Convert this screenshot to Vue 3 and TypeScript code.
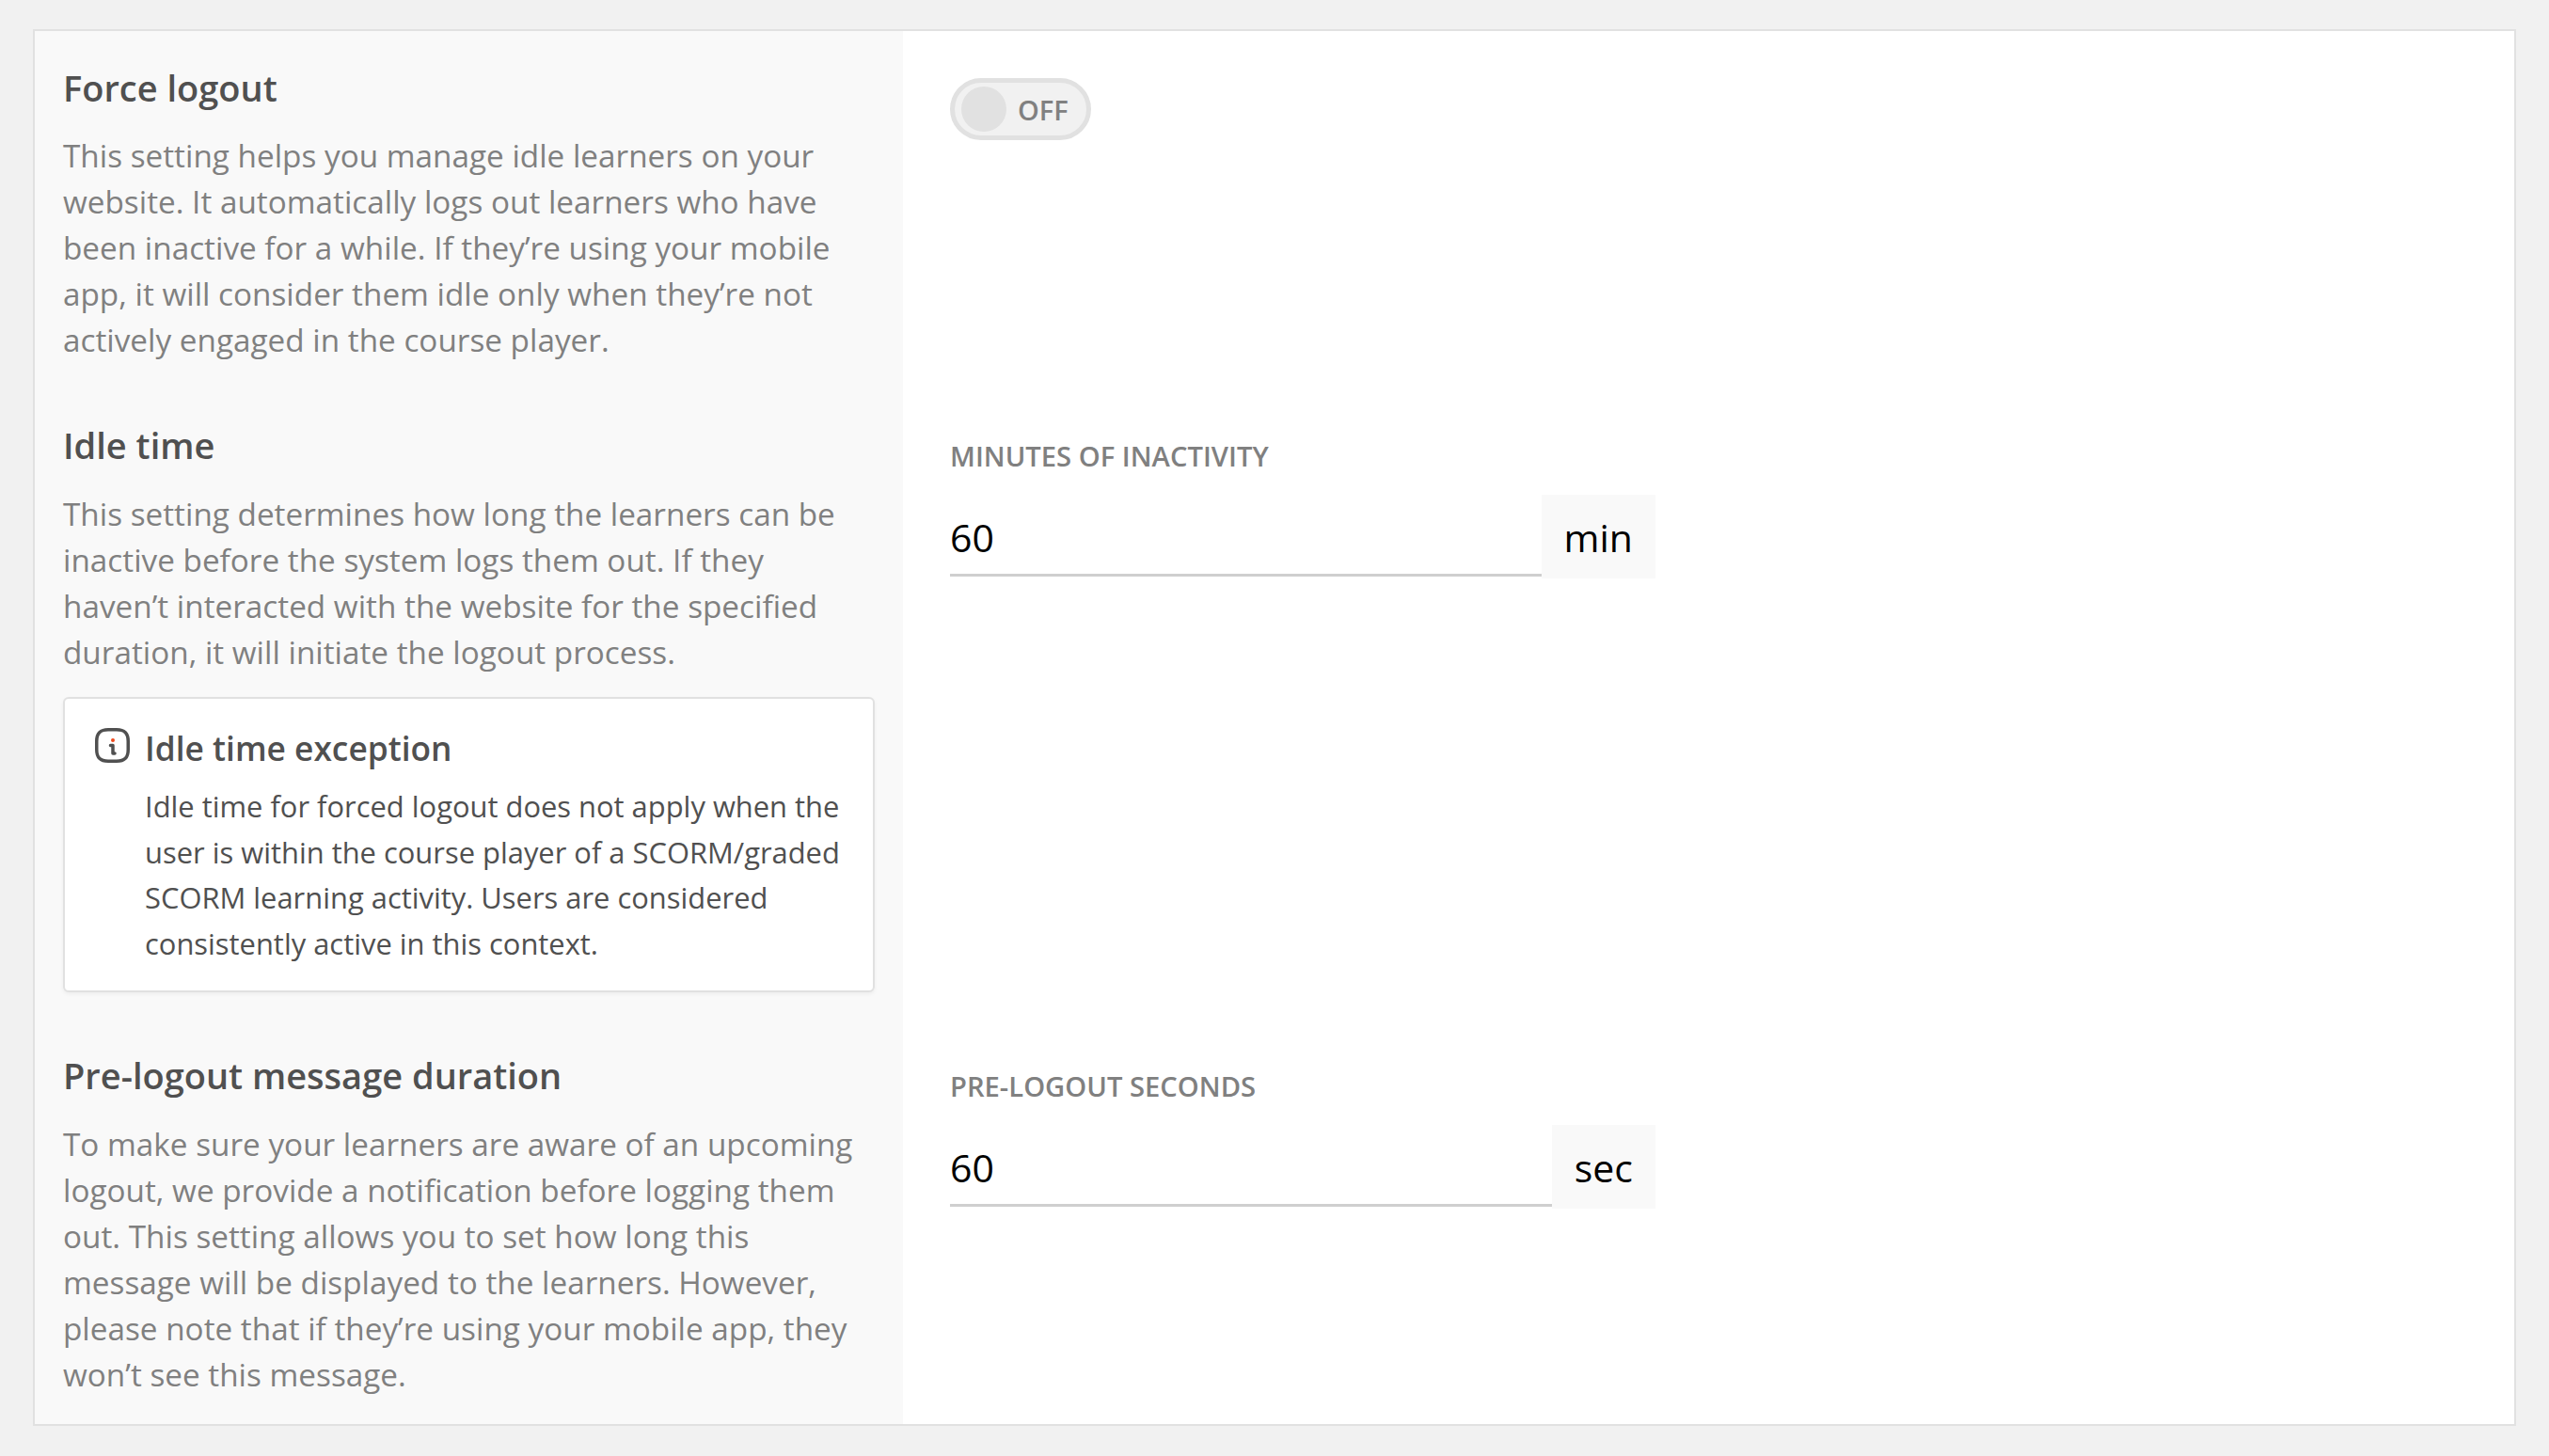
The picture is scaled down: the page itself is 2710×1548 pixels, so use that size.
<template>
  <div class="page">
    <div class="card">
      <section class="row row-force">
        <div class="info">
          <h3>Force logout</h3>
          <p>This setting helps you manage idle learners on your website. It automatically logs out learners who have been inactive for a while. If they’re using your mobile app, it will consider them idle only when they’re not actively engaged in the course player.</p>
        </div>
        <div class="field">
          <label class="switch">
            <input type="checkbox" v-model="forceLogout">
            <span class="knob"></span>
            <span class="state">{{ forceLogout ? 'ON' : 'OFF' }}</span>
          </label>
        </div>
      </section>

      <section class="row row-idle">
        <div class="info">
          <h3>Idle time</h3>
          <p>This setting determines how long the learners can be inactive before the system logs them out. If they haven’t interacted with the website for the specified duration, it will initiate the logout process.</p>
          <div class="notice">
            <svg class="notice-icon" viewBox="0 0 37 37" fill="none">
              <path d="M14 1.75H23C31.5 1.75 35.25 5.5 35.25 14V23C35.25 31.5 31.5 35.25 23 35.25H14C5.5 35.25 1.75 31.5 1.75 23V14C1.75 5.5 5.5 1.75 14 1.75Z" stroke="#505050" stroke-width="3.5" />
              <circle cx="19" cy="13" r="2" fill="#f04a1d" />
              <path d="M16.5 18.5H19V27H21" stroke="#505050" stroke-width="3.5" stroke-linecap="round" stroke-linejoin="round" />
            </svg>
            <div>
              <h4>Idle time exception</h4>
              <p>Idle time for forced logout does not apply when the user is within the course player of a SCORM/graded SCORM learning activity. Users are considered consistently active in this context.</p>
            </div>
          </div>
        </div>
        <div class="field">
          <label class="field-label" for="idle-minutes">MINUTES OF INACTIVITY</label>
          <div class="input-group">
            <input id="idle-minutes" type="text" v-model="idleMinutes">
            <span class="addon">min</span>
          </div>
        </div>
      </section>

      <section class="row row-message">
        <div class="info">
          <h3>Pre-logout message duration</h3>
          <p>To make sure your learners are aware of an upcoming logout, we provide a notification before logging them out. This setting allows you to set how long this message will be displayed to the learners. However, please note that if they’re using your mobile app, they won’t see this message.</p>
        </div>
        <div class="field">
          <label class="field-label" for="pre-seconds">PRE-LOGOUT SECONDS</label>
          <div class="input-group">
            <input id="pre-seconds" type="text" v-model="preSeconds">
            <span class="addon">sec</span>
          </div>
        </div>
      </section>
    </div>
  </div>
</template>

<script setup lang="ts">
import { ref, Ref } from 'vue';

const forceLogout: Ref<boolean> = ref(false);
const idleMinutes: Ref<string> = ref('60');
const preSeconds: Ref<string> = ref('60');
</script>

<style>
body {
  background: #f1f1f1;
}
</style>

<style scoped>
* {
  box-sizing: border-box;
}
.page {
  padding: 31px 35px 32px;
  font-family: "Open Sans", "Noto Sans", sans-serif;
}
.card {
  background: #fff;
  border: 2px solid #e1e1e1;
}
.row {
  display: grid;
  grid-template-columns: 923px 1fr;
}
.info {
  background: #f9f9f9;
  padding: 34px 30px 30px;
}
.row-force .info {
  padding-top: 36px;
  padding-bottom: 29px;
}
.row-force h3 {
  margin-bottom: 24px;
}
.row-message .info {
  padding-top: 34px;
  padding-bottom: 28px;
}
h3 {
  margin: 0 0 25px;
  font-size: 38px;
  line-height: 48px;
  font-weight: 600;
  color: #505050;
}
.info p {
  margin: 0;
  font-size: 33.3px;
  line-height: 49px;
  color: #808080;
}
.notice {
  display: flex;
  gap: 16px;
  margin-top: 23px;
  padding: 28px 14px 26px 32px;
  background: #fff;
  border: 2px solid #e1e1e1;
  border-radius: 6px;
  box-shadow: 0 2px 4px rgba(0, 0, 0, 0.05);
}
.notice-icon {
  flex: none;
  width: 37px;
  height: 37px;
  margin-top: 3px;
}
.notice h4 {
  margin: 0 0 14px;
  font-size: 35.3px;
  line-height: 48px;
  font-weight: 600;
  color: #505050;
}
.notice p {
  font-size: 30.9px;
  line-height: 48.5px;
  color: #505050;
}
.field {
  padding: 50px 0 0 50px;
}
.row-idle .field,
.row-message .field {
  padding-top: 52px;
}
.switch {
  position: relative;
  display: flex;
  align-items: center;
  width: 150px;
  height: 66px;
  padding-left: 7px;
  background: #f1f1f1;
  border: 5px solid #e1e1e1;
  border-radius: 33px;
}
.switch input {
  position: absolute;
  opacity: 0;
  width: 0;
  height: 0;
}
.knob {
  width: 48px;
  height: 48px;
  border-radius: 50%;
  background: #e1e1e1;
}
.state {
  margin-left: 12px;
  font-size: 29px;
  font-weight: 600;
  color: #808080;
}
.field-label {
  display: block;
  margin-bottom: 23px;
  font-size: 29.2px;
  line-height: 36px;
  font-weight: 600;
  color: #808080;
}
.input-group {
  display: flex;
  width: 750px;
  height: 89px;
}
.input-group input {
  flex: 1;
  min-width: 0;
  height: 87px;
  padding: 5px 0 0;
  border: 0;
  border-bottom: 3px solid #cfcfcf;
  outline: none;
  background: transparent;
  font: inherit;
  font-size: 41px;
  color: #000;
}
.addon {
  display: flex;
  align-items: center;
  padding: 0 24px;
  background: #f9f9f9;
  font-size: 41px;
  color: #000;
}
</style>
